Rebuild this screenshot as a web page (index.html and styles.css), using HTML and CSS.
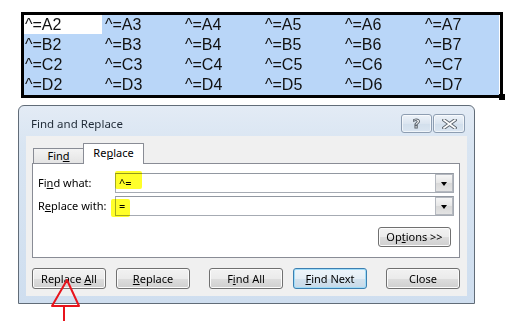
FILE: index.html
```html
<!DOCTYPE html>
<html>
<head>
<meta charset="utf-8">
<title>Find and Replace</title>
<link rel="stylesheet" href="styles.css">
</head>
<body>
<div class="page">
  <div class="sheet">
    <div class="grid">
      <div class="cell active">^=A2</div><div class="cell">^=A3</div><div class="cell">^=A4</div><div class="cell">^=A5</div><div class="cell">^=A6</div><div class="cell">^=A7</div>
      <div class="cell">^=B2</div><div class="cell">^=B3</div><div class="cell">^=B4</div><div class="cell">^=B5</div><div class="cell">^=B6</div><div class="cell">^=B7</div>
      <div class="cell">^=C2</div><div class="cell">^=C3</div><div class="cell">^=C4</div><div class="cell">^=C5</div><div class="cell">^=C6</div><div class="cell">^=C7</div>
      <div class="cell">^=D2</div><div class="cell">^=D3</div><div class="cell">^=D4</div><div class="cell">^=D5</div><div class="cell">^=D6</div><div class="cell">^=D7</div>
    </div>
    <div class="handle"></div>
  </div>

  <div class="dialog">
    <div class="titlebar">
      <span class="title">Find and Replace</span>
      <div class="capbtns">
        <div class="capbtn help">?</div>
        <div class="capbtn close">
          <svg width="15" height="10" viewBox="0 0 15 10">
            <path d="M2 1 L13 9 M13 1 L2 9" stroke="#5d6670" stroke-width="3.6" stroke-linecap="square" fill="none"/>
            <path d="M2 1 L13 9 M13 1 L2 9" stroke="#ffffff" stroke-width="1.6" stroke-linecap="square" fill="none"/>
          </svg>
        </div>
      </div>
    </div>
    <div class="client">
      <div class="tabs">
        <div class="tab"><span>Fin<u>d</u></span></div>
        <div class="tab selected"><span>Re<u>p</u>lace</span></div>
      </div>
      <div class="panel">
        <div class="field">
          <span class="label">Fi<u>n</u>d what:</span>
          <div class="combo"><span class="val">^=</span><div class="drop"><span class="tri"></span></div></div>
        </div>
        <div class="field second">
          <span class="label">R<u>e</u>place with:</span>
          <div class="combo"><span class="val">=</span><div class="drop"><span class="tri"></span></div></div>
        </div>
        <div class="optrow">
          <div class="btn options"><span>Op<u>t</u>ions &gt;&gt;</span></div>
        </div>
      </div>
      <div class="buttons">
        <div class="btn"><span>Replace <u>A</u>ll</span></div>
        <div class="btn g10"><span><u>R</u>eplace</span></div>
        <div class="btn g19"><span>F<u>i</u>nd All</span></div>
        <div class="btn g10 default"><span><u>F</u>ind Next</span></div>
        <div class="btn g19"><span>Close</span></div>
      </div>
    </div>
  </div>

  <div class="hl hl1"></div>
  <div class="hl hl2"></div>
  <svg class="arrow" width="510" height="321" viewBox="0 0 510 321">
    <path d="M67 280 L52 306 L79 306 Z" stroke="#e8141c" stroke-width="2" fill="none" stroke-linejoin="round"/>
    <path d="M64 306 L64 321" stroke="#e8141c" stroke-width="2" fill="none"/>
  </svg>
</div>
</body>
</html>
```
FILE: styles.css
```css
html, body {
  margin: 0;
  padding: 0;
  background: #ffffff;
}

.page {
  position: relative;
  width: 510px;
  height: 321px;
  overflow: hidden;
  font-family: "Noto Sans", "Liberation Sans", sans-serif;
  font-size: 11px;
  color: #000;
}

/* spreadsheet selection */
.sheet {
  position: relative;
  margin: 12px 0 0 21px;
  width: 482px;
  height: 86px;
  border: 3px solid #000;
  box-sizing: border-box;
}

.grid {
  display: grid;
  grid-template-columns: repeat(5, 80px) 1fr;
  grid-template-rows: repeat(4, 20px);
  height: 80px;
  background: #b9d6f8;
  border-right: 1px solid #ffffff;
  box-sizing: border-box;
  overflow: hidden;
}

.cell {
  padding-left: 1px;
  font-family: "Liberation Sans", Arial, sans-serif;
  font-size: 16px;
  line-height: 20px;
  white-space: nowrap;
  color: #111;
}

.cell.active {
  background: #ffffff;
  margin: 0 2px 1px 0;
  line-height: 19px;
}

.handle {
  position: absolute;
  right: -5px;
  bottom: -5px;
  width: 6px;
  height: 6px;
  background: #000;
}

/* dialog */
.dialog {
  margin: 7px 0 0 18px;
  width: 457px;
  height: 199px;
  box-sizing: border-box;
  border: 1px solid #616c78;
  border-radius: 6px 6px 0 0;
  background: linear-gradient(#e3ebf5 0%, #d9e5f2 20%, #cfdeef 100%);
  padding: 0 7px 7px 7px;
  display: flex;
  flex-direction: column;
}

.titlebar {
  height: 30px;
  display: flex;
  align-items: flex-start;
  flex: none;
}

.title {
  padding: 10px 0 0 5px;
  line-height: 16px;
  font-size: 11.5px;
  color: #1f2a36;
}

.capbtns {
  margin: 8px 2px 0 auto;
  display: flex;
  gap: 1px;
}

.capbtn {
  width: 31px;
  height: 19px;
  box-sizing: border-box;
  border: 1px solid #8d9db1;
  border-radius: 3px;
  background: linear-gradient(#eef3f9, #dbe5f0 50%, #d2dfec 51%, #dae5f1);
  box-shadow: inset 0 0 0 1px rgba(255,255,255,0.6);
  display: flex;
  align-items: center;
  justify-content: center;
}

.capbtn.close {
  width: 32px;
}

.help {
  font-family: "DejaVu Sans", sans-serif;
  font-weight: bold;
  font-size: 13px;
  line-height: 13px;
  color: #ffffff;
  -webkit-text-stroke: 1px #5d6670;
}

.client {
  flex: 1;
  background: #f0f0f0;
  padding: 7px 7px 0 6px;
  display: flex;
  flex-direction: column;
}

.tabs {
  display: flex;
  align-items: flex-end;
  height: 20px;
  padding-left: 1px;
  position: relative;
  z-index: 1;
}

.tab {
  box-sizing: border-box;
  border: 1px solid #898c95;
  border-bottom: none;
  text-align: center;
  font-size: 11px;
}

.tab:first-child {
  width: 50px;
  height: 15px;
  line-height: 14px;
  background: linear-gradient(#f3f3f3, #e4e4e4);
  border-right: none;
}

.tab.selected {
  width: 61px;
  height: 21px;
  line-height: 18px;
  background: #ffffff;
  margin-bottom: -1px;
  border-radius: 1px 1px 0 0;
}

.panel {
  width: 428px;
  height: 95px;
  box-sizing: border-box;
  border: 1px solid #898c95;
  background: #ffffff;
  padding: 9px 5px 0 5px;
}

.field {
  display: flex;
  align-items: center;
  height: 20px;
}

.field.second {
  margin-top: 3px;
}

.label {
  width: 77px;
  flex: none;
  line-height: 16px;
}

.combo {
  flex: 1;
  height: 20px;
  box-sizing: border-box;
  border: 1px solid #a6abb3;
  border-top-color: #9298a1;
  background: #ffffff;
  display: flex;
  align-items: center;
  justify-content: space-between;
  padding-left: 3px;
}

.val {
  line-height: 16px;
}

.drop {
  width: 18px;
  height: 18px;
  box-sizing: border-box;
  border: 1px solid #b4b8bf;
  background: linear-gradient(#f6f6f6, #e6e6e6 50%, #d8d8d8 51%, #e3e3e3);
  display: flex;
  align-items: center;
  justify-content: center;
}

.tri {
  width: 0;
  height: 0;
  border-left: 3.5px solid transparent;
  border-right: 3.5px solid transparent;
  border-top: 4px solid #000;
  margin-top: 1px;
}

.optrow {
  display: flex;
  justify-content: flex-end;
  margin-top: 11px;
  padding-right: 3px;
}

.btn {
  width: 74px;
  height: 21px;
  box-sizing: border-box;
  border: 1px solid #707070;
  border-radius: 3px;
  background: linear-gradient(#f2f2f2 0%, #ebebeb 50%, #dddddd 51%, #cfcfcf 100%);
  box-shadow: inset 0 0 0 1px #fbfbfb;
  display: flex;
  align-items: center;
  justify-content: center;
  font-size: 11px;
  line-height: 16px;
  white-space: nowrap;
  flex: none;
}

.btn.options {
  width: 73px;
  height: 20px;
}

.buttons {
  display: flex;
  margin-top: 10px;
}

.g10 { margin-left: 10px; }
.g19 { margin-left: 19px; }

.btn.default {
  border-color: #3c7fb1;
  box-shadow: inset 0 0 0 1px #9fdcf8;
  background: linear-gradient(#eef5fa 0%, #e4eef6 50%, #d3e2ee 51%, #c7d9e8 100%);
}

/* annotations */
.hl {
  position: absolute;
  background: #ffff2a;
  mix-blend-mode: multiply;
  border-radius: 2px;
}

.hl1 {
  left: 115px;
  top: 171px;
  width: 27px;
  height: 18px;
}

.hl2 {
  left: 111px;
  top: 199px;
  width: 19px;
  height: 18px;
}

.arrow {
  position: absolute;
  left: 0;
  top: 0;
  pointer-events: none;
}
```
